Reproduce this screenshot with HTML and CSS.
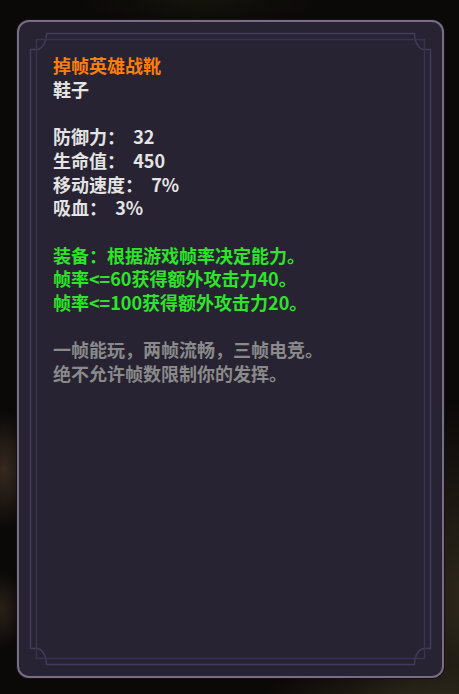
FILE: index.html
```html
<!DOCTYPE html>
<html lang="zh-CN">
<head>
    <meta charset="UTF-8">
    <meta name="viewport" content="width=device-width, initial-scale=1.0">
    <title>掉帧英雄战靴</title>
    <link rel="stylesheet" href="styles.css">
</head>
<body>
    <!-- Item tooltip -->
    <div class="tooltip">
        <svg class="frame" viewBox="0 0 423 654" width="423" height="654">
            <path class="frame-outer" d="M27.5 11.5 H395.5 A10 16 0 0 0 405.5 27.5 H411.5 V626.5 H405.5 A10 16 0 0 0 395.5 642.5 H27.5 A10 16 0 0 0 17.5 626.5 H11.5 V27.5 H17.5 A10 16 0 0 0 27.5 11.5 Z"/>
            <rect class="frame-inner" x="17.5" y="17.5" width="388" height="619"/>
        </svg>

        <div class="item-name">掉帧英雄战靴</div>
        <div class="item-type">鞋子</div>

        <div class="block stats">
            <p>防御力：  32</p>
            <p>生命值：  450</p>
            <p>移动速度：  7%</p>
            <p>吸血：  3%</p>
        </div>

        <div class="block effect">
            <p>装备：根据游戏帧率决定能力。</p>
            <p>帧率&lt;=60获得额外攻击力40。</p>
            <p>帧率&lt;=100获得额外攻击力20。</p>
        </div>

        <div class="block lore">
            <p>一帧能玩，两帧流畅，三帧电竞。</p>
            <p>绝不允许帧数限制你的发挥。</p>
        </div>
    </div>
</body>
</html>
```

FILE: styles.css
```css
body {
    margin: 0;
    width: 459px;
    height: 694px;
    overflow: hidden;
    font-family: "Noto Sans CJK SC", "Noto Sans", sans-serif;
    background:
        radial-gradient(ellipse 30px 60px at 4px 470px, rgba(70, 55, 42, 0.7), transparent),
        radial-gradient(ellipse 22px 40px at 2px 610px, rgba(60, 50, 35, 0.6), transparent),
        radial-gradient(ellipse 120px 200px at 470px 600px, rgba(48, 42, 28, 0.95), transparent),
        radial-gradient(ellipse 160px 40px at 420px 700px, rgba(45, 40, 26, 0.95), transparent),
        radial-gradient(ellipse 120px 30px at 200px 0, rgba(22, 22, 12, 0.8), transparent),
        #0b0808;
}

.tooltip {
    position: relative;
    box-sizing: border-box;
    width: 427px;
    height: 658px;
    margin: 20px 0 0 17px;
    padding: 32px 30px 0 34px;
    background: #272332;
    border: 2px solid #796e81;
    border-radius: 12px;
    box-shadow: 0 0 0 1px #141117;
    font-size: 18px;
    font-weight: 700;
    line-height: 23.7px;
    color: #e4e4e4;
}

.frame {
    position: absolute;
    left: 0;
    top: 0;
    fill: none;
    stroke-width: 1.5;
}

.frame-outer {
    stroke: #443a5c;
}

.frame-inner {
    stroke: #3a3350;
}

.item-name {
    color: #ff7d0a;
}

.block {
    margin-top: 23.7px;
}

.block p {
    margin: 0;
    white-space: pre;
}

.effect {
    color: #2fe22a;
}

.lore {
    color: #8a8a8a;
}
```
